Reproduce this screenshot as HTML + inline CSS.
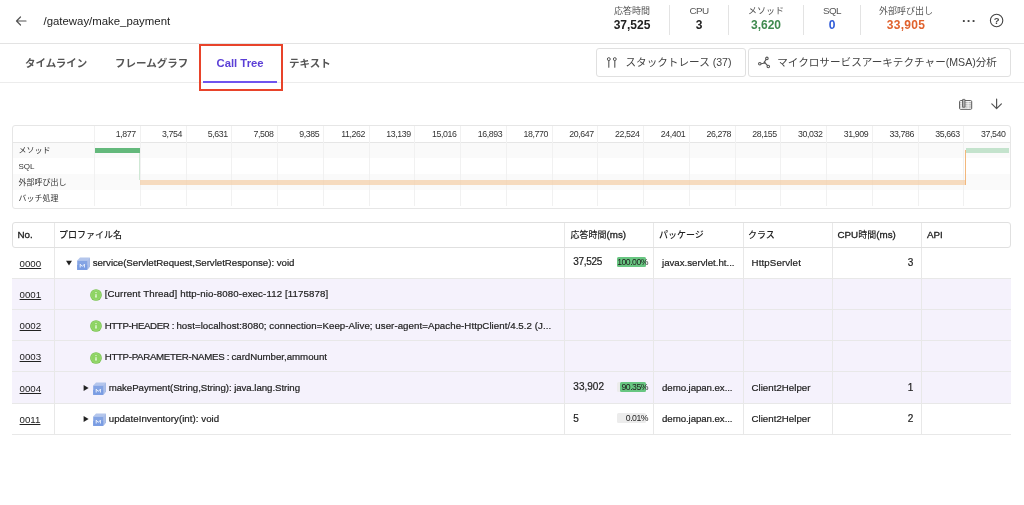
<!DOCTYPE html>
<html lang="ja">
<head>
<meta charset="utf-8">
<title>Call Tree</title>
<style>
*{box-sizing:border-box;margin:0;padding:0}
html,body{width:1024px;height:505px;overflow:hidden;background:#fff}
body{will-change:transform;font-family:"Liberation Sans","Noto Sans CJK JP",sans-serif;color:#222;position:relative;font-size:11px}
.abs{position:absolute;white-space:nowrap}
/* header */
#hdr{position:absolute;left:0;top:0;width:1024px;height:44px;border-bottom:1px solid #e3e3e3}
#title{left:43.5px;top:14px;font-size:11.4px;color:#222;line-height:14px}
.stat{position:absolute;top:0;height:44px;text-align:center}
.stat .l.en{font-size:9.9px;letter-spacing:-0.55px;margin-top:-0.5px}
.stat .l{position:absolute;left:0;right:0;top:5px;font-size:9px;color:#555;line-height:12px;white-space:nowrap}
.stat .v{position:absolute;left:0;right:0;top:17px;font-size:12px;font-weight:bold;line-height:16px;color:#222;white-space:nowrap}
.vsep{position:absolute;top:5px;width:1px;height:30px;background:#e3e3e3}
/* tabs */
#tabs{position:absolute;left:0;top:44px;width:1024px;height:39px;border-bottom:1px solid #ececec}
.tab{position:absolute;top:56.1px;font-size:10.5px;font-weight:bold;color:#555;line-height:14px;white-space:nowrap}
.btn{position:absolute;top:48px;height:29px;border:1px solid #e0e0e0;border-radius:3px;background:#fff;font-size:10.6px;color:#444;line-height:27px;white-space:nowrap}
/* chart */
#chart{position:absolute;left:12px;top:125px;width:999px;height:84px;border:1px solid #e6e6e6;border-radius:3px;overflow:hidden}
.crow{position:absolute;left:0;width:997px;height:16px}
.clab{position:absolute;left:5.5px;font-size:8px;color:#333;line-height:16px;margin-top:0.7px;white-space:nowrap}
.tick{position:absolute;top:0;height:16px;width:45.75px;text-align:right;padding-right:3.6px;font-size:8.8px;letter-spacing:-0.4px;line-height:17.5px;color:#333}
.gl{position:absolute;top:0;width:1px;height:80px;background:#f1f1f1}
/* table */
#thead{position:absolute;left:12px;top:222px;width:999px;height:26px;border:1px solid #e0e0e0;border-radius:3px}
.th{position:absolute;top:222.6px;height:24px;font-size:9px;font-weight:500;color:#222;line-height:24px;white-space:nowrap}
.th b{font-weight:normal;font-size:9.8px;-webkit-text-stroke:0.3px #222}
.row{position:absolute;left:12px;width:999px;height:31.25px;border-bottom:1px solid #e8e8e8}
.row.p{background:#f5f2fc}
.cd{position:absolute;top:223px;width:1px;background:#e8e8e8}
.no{position:absolute;left:19.6px;margin-top:0.5px;font-size:9.7px;color:#222;text-decoration:underline;line-height:12px}
.pc{font-size:8.7px;line-height:10px;text-align:right;color:#222;letter-spacing:-0.5px}
.num{font-size:10px !important}
.tx{position:absolute;-webkit-text-stroke:0.2px #222;font-size:9.7px;color:#222;line-height:12px;white-space:nowrap}
</style>
</head>
<body>
<div id="hdr"></div>
<svg class="abs" style="left:14px;top:14px" width="14" height="14" viewBox="0 0 14 14"><path d="M12 7H2.5M6.5 3L2.5 7l4 4" fill="none" stroke="#555" stroke-width="1.2" stroke-linecap="round" stroke-linejoin="round"/></svg>
<div id="title" class="abs">/gateway/make_payment</div>

<div class="stat" style="left:600px;width:64px"><div class="l">応答時間</div><div class="v">37,525</div></div>
<div class="vsep" style="left:669px"></div>
<div class="stat" style="left:670px;width:58px"><div class="l en">CPU</div><div class="v">3</div></div>
<div class="vsep" style="left:728px"></div>
<div class="stat" style="left:729px;width:74px"><div class="l">メソッド</div><div class="v" style="color:#3f8a4f">3,620</div></div>
<div class="vsep" style="left:803px"></div>
<div class="stat" style="left:804px;width:56px"><div class="l en">SQL</div><div class="v" style="color:#2f5bd8">0</div></div>
<div class="vsep" style="left:860px"></div>
<div class="stat" style="left:861px;width:90px"><div class="l">外部呼び出し</div><div class="v" style="color:#e0622d;letter-spacing:0.3px">33,905</div></div>
<div class="abs" style="left:962px;top:13px;font-size:13px;font-weight:bold;color:#444;letter-spacing:0.5px">···</div>
<svg class="abs" style="left:989.4px;top:12.7px" width="15" height="15" viewBox="0 0 15 15"><circle cx="7.6" cy="7.5" r="6.2" fill="none" stroke="#444" stroke-width="1.1"/><text x="7.6" y="10.9" text-anchor="middle" font-size="9.5" font-weight="bold" font-family="Liberation Sans, sans-serif" fill="#444">?</text></svg>

<div id="tabs"></div>
<div class="tab" style="left:25px">タイムライン</div>
<div class="tab" style="left:115px">フレームグラフ</div>
<div class="tab" style="left:216.5px;color:#5b3fd6;font-size:11.3px">Call Tree</div>
<div class="tab" style="left:289px">テキスト</div>
<div class="abs" style="left:203px;top:81px;width:74px;height:2px;background:#6f55ee"></div>
<div class="abs" style="left:199px;top:44px;width:84px;height:47px;border:2px solid #e8432a"></div>

<div class="btn" style="left:596px;width:150px;padding-left:28.5px">スタックトレース (37)</div>
<div class="btn" style="left:748px;width:263px;padding-left:28.2px">マイクロサービスアーキテクチャー(MSA)分析</div>


<svg class="abs" style="left:957px;top:97px" width="17" height="15" viewBox="0 0 17 15"><rect x="2.6" y="3.6" width="12.1" height="8.7" rx="1" fill="none" stroke="#555" stroke-width="1"/><path d="M3 5.8h11.5M3 7.9h11.5M3 10h11.5" stroke="#777" stroke-width="0.7" fill="none"/><path d="M11.1 4v8M4.2 4v8" stroke="#fff" stroke-width="0.7" fill="none"/><rect x="5.5" y="2.4" width="2.5" height="7.8" rx="0.3" fill="#b0b0b0" stroke="#555" stroke-width="0.8"/></svg>
<svg class="abs" style="left:989px;top:97px" width="15" height="14" viewBox="0 0 15 14"><path d="M7.6 2v9.3M2.8 6.8L7.6 11.6 12.4 6.8" fill="none" stroke="#555" stroke-width="1.2" stroke-linecap="round" stroke-linejoin="round"/></svg>
<svg class="abs" style="left:606px;top:56px" width="12" height="14" viewBox="0 0 12 14"><circle cx="2.8" cy="3.1" r="1.45" fill="none" stroke="#555" stroke-width="1"/><circle cx="8.8" cy="3.1" r="1.45" fill="none" stroke="#555" stroke-width="1"/><path d="M2.8 4.8v6.4M8.8 4.8v6.4" stroke="#555" stroke-width="1.1" stroke-linecap="round"/></svg>
<svg class="abs" style="left:757px;top:56px" width="14" height="14" viewBox="0 0 14 14"><circle cx="2.8" cy="7.8" r="1.25" fill="none" stroke="#555" stroke-width="1.1"/><circle cx="9.9" cy="2.4" r="1.25" fill="none" stroke="#555" stroke-width="1.1"/><circle cx="11.3" cy="10.5" r="1.25" fill="none" stroke="#555" stroke-width="1.1"/><path d="M4.1 7.7l2.6-0.5 2.4-3.8M6.7 7.2h1.8l-1-1.6zM8.3 7.2l2.2 2.3" fill="none" stroke="#555" stroke-width="1.1" stroke-linejoin="round"/></svg>
<div id="chart">
 <div class="crow" style="top:16px;background:#fafafa"></div>
 <div class="crow" style="top:48px;background:#fafafa"></div>
 <div class="abs" style="left:0;top:16px;width:997px;height:1px;background:#e6e6e6"></div>
 <div class="clab" style="top:16px">メソッド</div>
 <div class="clab" style="top:32px">SQL</div>
 <div class="clab" style="top:48px">外部呼び出し</div>
 <div class="clab" style="top:64px">バッチ処理</div>
 <!--T--><div class="gl" style="left:80.50px"></div><div class="tick" style="left:80.50px">1,877</div>
<div class="gl" style="left:126.85px"></div><div class="tick" style="left:126.85px">3,754</div>
<div class="gl" style="left:172.60px"></div><div class="tick" style="left:172.60px">5,631</div>
<div class="gl" style="left:218.35px"></div><div class="tick" style="left:218.35px">7,508</div>
<div class="gl" style="left:264.10px"></div><div class="tick" style="left:264.10px">9,385</div>
<div class="gl" style="left:309.85px"></div><div class="tick" style="left:309.85px">11,262</div>
<div class="gl" style="left:355.60px"></div><div class="tick" style="left:355.60px">13,139</div>
<div class="gl" style="left:401.35px"></div><div class="tick" style="left:401.35px">15,016</div>
<div class="gl" style="left:447.10px"></div><div class="tick" style="left:447.10px">16,893</div>
<div class="gl" style="left:492.85px"></div><div class="tick" style="left:492.85px">18,770</div>
<div class="gl" style="left:538.60px"></div><div class="tick" style="left:538.60px">20,647</div>
<div class="gl" style="left:584.35px"></div><div class="tick" style="left:584.35px">22,524</div>
<div class="gl" style="left:630.10px"></div><div class="tick" style="left:630.10px">24,401</div>
<div class="gl" style="left:675.85px"></div><div class="tick" style="left:675.85px">26,278</div>
<div class="gl" style="left:721.60px"></div><div class="tick" style="left:721.60px">28,155</div>
<div class="gl" style="left:767.35px"></div><div class="tick" style="left:767.35px">30,032</div>
<div class="gl" style="left:813.10px"></div><div class="tick" style="left:813.10px">31,909</div>
<div class="gl" style="left:858.85px"></div><div class="tick" style="left:858.85px">33,786</div>
<div class="gl" style="left:904.60px"></div><div class="tick" style="left:904.60px">35,663</div>
<div class="gl" style="left:950.35px"></div><div class="tick" style="left:950.35px">37,540</div>
<div class="abs" style="left:81.5px;top:21.5px;width:45px;height:5.5px;background:#64b97c"></div>
 <div class="abs" style="left:126px;top:27px;width:0.6px;height:27px;background:#cfe8d5"></div>
 <div class="abs" style="left:126.5px;top:53.5px;width:826px;height:5.7px;background:rgba(244,200,155,0.62)"></div>
 <div class="abs" style="left:951.6px;top:24px;width:0.8px;height:35px;background:#f2b77c"></div>
 <div class="abs" style="left:952.5px;top:21.5px;width:43.5px;height:5.5px;background:rgba(160,212,175,0.6)"></div>
<!--/T-->
</div>

<!--R--><div class="row" style="top:247.25px"></div>
<div class="no" style="top:257.18px">0000</div>
<svg class="abs" style="left:65.30px;top:259.18px" width="8" height="8" viewBox="0 0 8 8"><path d="M1 1.8h6L4 6.6z" fill="#222"/></svg><svg class="abs" style="left:76.90px;top:257.07px" width="13" height="13" viewBox="0 0 13 13"><path d="M0.2 3.5L3 0.4h9.9L10.2 3.5z" fill="#b4c6ec"/><path d="M10.2 3.5L12.9 0.4v9.3L10.2 12.9z" fill="#9ab1e2"/><path d="M11.2 2.6l0.9-1v9.2l-0.9 1z" fill="#b3c5ea"/><rect x="0.2" y="3.5" width="10" height="9.4" fill="#84a4e4"/><rect x="0.2" y="8" width="10" height="4.9" fill="#7a9de3"/><path d="M3.2 10.5V7.2l2.1 2.2 2.1-2.2v3.3" fill="none" stroke="#f4f7fd" stroke-width="1" opacity="0.92"/></svg><div class="tx" style="left:92.70px;top:257.18px"><span style="letter-spacing:-0.028px">service(ServletRequest,ServletResponse): void</span></div>
<div class="tx num" style="left:573.3px;top:256.38px"><span style="letter-spacing:-0.297px">37,525</span></div>
<div class="abs" style="left:617px;top:256.98px;width:28.5px;height:10px;background:#ececec;border-radius:1.5px"></div><div class="abs" style="left:617.00px;top:256.98px;width:28.50px;height:10px;background:#68c681;border-radius:1.5px"></div><div class="abs pc" style="left:597px;width:51px;top:256.98px">100.00%</div>
<div class="tx" style="left:662px;top:256.68px"><span style="letter-spacing:-0.010px">javax.servlet.ht...</span></div>
<div class="tx" style="left:751.5px;top:256.68px"><span style="letter-spacing:0.143px">HttpServlet</span></div>
<div class="tx num" style="left:860px;width:53.2px;text-align:right;top:257.07px">3</div>
<div class="row p" style="top:278.50px"></div>
<div class="no" style="top:288.43px">0001</div>
<svg class="abs" style="left:89.80px;top:289.12px" width="12" height="12" viewBox="0 0 12 12"><circle cx="6" cy="6" r="5.85" fill="#78c24e"/><circle cx="6" cy="6" r="4.8" fill="#8ed463" stroke="#a9e184" stroke-width="0.5"/><circle cx="6" cy="3.6" r="0.6" fill="#fff"/><path d="M5.6 4.9h0.8l0.3 3.6h-1.4z" fill="#fff"/></svg><div class="tx" style="left:104.70px;top:288.43px"><span style="letter-spacing:0.115px">[Current Thread] http-nio-8080-exec-112 [1175878]</span></div>
<div class="row p" style="top:309.75px"></div>
<div class="no" style="top:319.68px">0002</div>
<svg class="abs" style="left:89.80px;top:320.38px" width="12" height="12" viewBox="0 0 12 12"><circle cx="6" cy="6" r="5.85" fill="#78c24e"/><circle cx="6" cy="6" r="4.8" fill="#8ed463" stroke="#a9e184" stroke-width="0.5"/><circle cx="6" cy="3.6" r="0.6" fill="#fff"/><path d="M5.6 4.9h0.8l0.3 3.6h-1.4z" fill="#fff"/></svg><div class="tx" style="left:104.70px;top:319.68px"><span style="white-space:pre;letter-spacing:-0.376px">HTTP-HEADER : </span><span style="letter-spacing:0.054px">host=localhost:8080; connection=Keep-Alive; user-agent=Apache-HttpClient/4.5.2 (J...</span></div>
<div class="row p" style="top:341.00px"></div>
<div class="no" style="top:350.93px">0003</div>
<svg class="abs" style="left:89.80px;top:351.62px" width="12" height="12" viewBox="0 0 12 12"><circle cx="6" cy="6" r="5.85" fill="#78c24e"/><circle cx="6" cy="6" r="4.8" fill="#8ed463" stroke="#a9e184" stroke-width="0.5"/><circle cx="6" cy="3.6" r="0.6" fill="#fff"/><path d="M5.6 4.9h0.8l0.3 3.6h-1.4z" fill="#fff"/></svg><div class="tx" style="left:104.70px;top:350.93px"><span style="white-space:pre;letter-spacing:-0.308px">HTTP-PARAMETER-NAMES : </span><span style="letter-spacing:-0.019px">cardNumber,ammount</span></div>
<div class="row p" style="top:372.25px"></div>
<div class="no" style="top:382.18px">0004</div>
<svg class="abs" style="left:81.50px;top:384.18px" width="8" height="8" viewBox="0 0 8 8"><path d="M1.6 1l5 3-5 3z" fill="#222"/></svg><svg class="abs" style="left:93.00px;top:382.07px" width="13" height="13" viewBox="0 0 13 13"><path d="M0.2 3.5L3 0.4h9.9L10.2 3.5z" fill="#b4c6ec"/><path d="M10.2 3.5L12.9 0.4v9.3L10.2 12.9z" fill="#9ab1e2"/><path d="M11.2 2.6l0.9-1v9.2l-0.9 1z" fill="#b3c5ea"/><rect x="0.2" y="3.5" width="10" height="9.4" fill="#84a4e4"/><rect x="0.2" y="8" width="10" height="4.9" fill="#7a9de3"/><path d="M3.2 10.5V7.2l2.1 2.2 2.1-2.2v3.3" fill="none" stroke="#f4f7fd" stroke-width="1" opacity="0.92"/></svg><div class="tx" style="left:108.75px;top:382.18px"><span style="letter-spacing:-0.059px">makePayment(String,String): java.lang.String</span></div>
<div class="tx num" style="left:573.3px;top:381.38px"><span style="letter-spacing:0.028px">33,902</span></div>
<div class="abs" style="left:617px;top:381.98px;width:28.5px;height:10px;background:#ececec;border-radius:1.5px"></div><div class="abs" style="left:619.75px;top:381.98px;width:25.75px;height:10px;background:#68c681;border-radius:1.5px"></div><div class="abs pc" style="left:597px;width:51px;top:381.98px">90.35%</div>
<div class="tx" style="left:662px;top:381.68px"><span style="letter-spacing:-0.071px">demo.japan.ex...</span></div>
<div class="tx" style="left:751.5px;top:381.68px"><span style="letter-spacing:0.023px">Client2Helper</span></div>
<div class="tx num" style="left:860px;width:53.2px;text-align:right;top:382.07px">1</div>
<div class="row" style="top:403.50px"></div>
<div class="no" style="top:413.43px">0011</div>
<svg class="abs" style="left:81.50px;top:415.43px" width="8" height="8" viewBox="0 0 8 8"><path d="M1.6 1l5 3-5 3z" fill="#222"/></svg><svg class="abs" style="left:93.00px;top:413.32px" width="13" height="13" viewBox="0 0 13 13"><path d="M0.2 3.5L3 0.4h9.9L10.2 3.5z" fill="#b4c6ec"/><path d="M10.2 3.5L12.9 0.4v9.3L10.2 12.9z" fill="#9ab1e2"/><path d="M11.2 2.6l0.9-1v9.2l-0.9 1z" fill="#b3c5ea"/><rect x="0.2" y="3.5" width="10" height="9.4" fill="#84a4e4"/><rect x="0.2" y="8" width="10" height="4.9" fill="#7a9de3"/><path d="M3.2 10.5V7.2l2.1 2.2 2.1-2.2v3.3" fill="none" stroke="#f4f7fd" stroke-width="1" opacity="0.92"/></svg><div class="tx" style="left:108.75px;top:413.43px"><span style="letter-spacing:0.045px">updateInventory(int): void</span></div>
<div class="tx num" style="left:573.3px;top:412.62px"><span style="letter-spacing:0.000px">5</span></div>
<div class="abs" style="left:617px;top:413.23px;width:28.5px;height:10px;background:#ececec;border-radius:1.5px"></div><div class="abs pc" style="left:597px;width:51px;top:413.23px">0.01%</div>
<div class="tx" style="left:662px;top:412.93px"><span style="letter-spacing:-0.071px">demo.japan.ex...</span></div>
<div class="tx" style="left:751.5px;top:412.93px"><span style="letter-spacing:0.023px">Client2Helper</span></div>
<div class="tx num" style="left:860px;width:53.2px;text-align:right;top:413.32px">2</div>
<div class="cd" style="left:54.00px;height:211.75px"></div>
<div class="cd" style="left:564.00px;height:211.75px"></div>
<div class="cd" style="left:653.30px;height:211.75px"></div>
<div class="cd" style="left:742.50px;height:211.75px"></div>
<div class="cd" style="left:831.70px;height:211.75px"></div>
<div class="cd" style="left:921.00px;height:211.75px"></div>
<!--/R-->
<div id="thead"></div>
<div class="th" style="left:17.5px"><b>No.</b></div>
<div class="th" style="left:59px">プロファイル名</div>
<div class="th" style="left:570.5px">応答時間<b>(ms)</b></div>
<div class="th" style="left:659px">パッケージ</div>
<div class="th" style="left:748px">クラス</div>
<div class="th" style="left:837.5px"><b>CPU</b>時間<b>(ms)</b></div>
<div class="th" style="left:927px"><b>API</b></div>
</body>
</html>
